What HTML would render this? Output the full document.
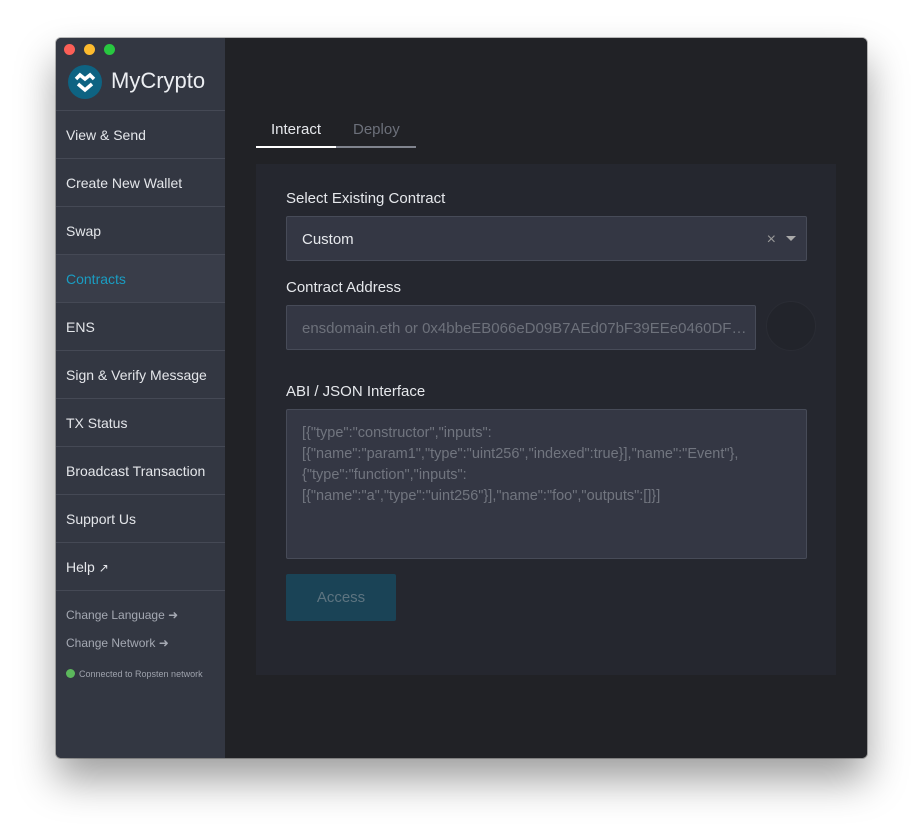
<!DOCTYPE html>
<html><head><meta charset="utf-8"><style>
*{box-sizing:border-box;margin:0;padding:0}
body{width:923px;height:832px;background:#fff;font-family:"Liberation Sans",sans-serif;position:relative;overflow:hidden}
.win{position:absolute;left:56px;top:38px;width:811px;height:720px;border-radius:5px;overflow:hidden;background:#212226;box-shadow:0 22px 40px rgba(0,0,0,.38),0 0 0 1px rgba(0,0,0,.25)}
.side{position:absolute;left:0;top:0;width:169px;height:720px;background:#333742}
.dot{position:absolute;top:6px;width:11px;height:11px;border-radius:50%}
.logo{position:absolute;left:12px;top:27px;width:34px;height:34px;border-radius:50%;background:#0e6382}
.brand{position:absolute;left:55px;top:30px;font-size:22px;color:#eceef2}
.nav{position:absolute;left:0;top:72px;width:169px}
.nav div{height:48px;border-top:1px solid #454955;color:#e4e6ea;font-size:14px;padding-left:10px;line-height:49px}
.nav div.act{background:#393d49;color:#1a9dc2}
.sm{position:absolute;left:10px;font-size:12px;color:#a5a9b3}
.main{position:absolute;left:169px;top:0;right:0;bottom:0;background:#212226}
.tab{position:absolute;top:83px;font-size:15px}
.panel{position:absolute;left:31px;top:126px;width:580px;height:511px;background:#25272f}
.lbl{position:absolute;left:30px;font-size:15px;color:#e6e8ec}
.inp{position:absolute;left:30px;width:521px;background:#343744;border:1px solid #474b58;border-radius:2px;font-size:15px}
</style></head><body>
<div class="win">
<div class="side">
<div class="dot" style="left:8px;background:#fc5f57"></div>
<div class="dot" style="left:28px;background:#fdbb2e"></div>
<div class="dot" style="left:48px;background:#28c840"></div>
<div class="logo"><svg width="34" height="34" viewBox="0 0 34 34"><path d="M8 14 L12 10 L17 14 L22 10 L26 14" stroke="#fff" stroke-width="3.5" fill="none"/><path d="M10 19 L17 25 L24 19" stroke="#fff" stroke-width="3.5" fill="none"/></svg></div>
<div class="brand">MyCrypto</div>
<div class="nav">
<div>View &amp; Send</div><div>Create New Wallet</div><div>Swap</div><div class="act">Contracts</div><div>ENS</div><div>Sign &amp; Verify Message</div><div>TX Status</div><div>Broadcast Transaction</div><div>Support Us</div><div>Help <span style="font-size:12px">↗</span></div><div style="height:1px"></div>
</div>
<div class="sm" style="top:570px">Change Language ➜</div>
<div class="sm" style="top:598px">Change Network ➜</div>
<div class="sm" style="top:631px;font-size:9px;color:#9ea2ac"><span style="display:inline-block;width:9px;height:9px;border-radius:50%;background:#5cb85c;vertical-align:-1px;margin-right:4px"></span>Connected to Ropsten network</div>
</div>
<div class="main">
<div class="tab" style="left:46px;color:#e6e8ec">Interact</div>
<div class="tab" style="left:128px;color:#6c707a">Deploy</div>
<div style="position:absolute;left:31px;top:108px;width:80px;height:2px;background:#fff"></div>
<div style="position:absolute;left:111px;top:108px;width:80px;height:2px;background:#80848e"></div>
<div class="panel">
<div class="lbl" style="top:26px">Select Existing Contract</div>
<div class="inp" style="top:52px;height:45px;line-height:45px;padding-left:15px;color:#e6e8ec">Custom<span style="position:absolute;right:30px;color:#999;font-size:16px">×</span><span style="position:absolute;right:10px;top:19px;border:5px solid transparent;border-top-color:#aaa;width:0;height:0"></span></div>
<div class="lbl" style="top:115px">Contract Address</div>
<div class="inp" style="top:141px;width:470px;height:45px;line-height:45px;padding-left:15px;color:#6d717b;white-space:nowrap;overflow:hidden">ensdomain.eth or 0x4bbeEB066eD09B7AEd07bF39EEe0460DF…</div>
<div style="position:absolute;left:510px;top:137px;width:50px;height:50px;border-radius:50%;background:#22242b;border:1px solid #2a2c34"></div>
<div class="lbl" style="top:219px">ABI / JSON Interface</div>
<div class="inp" style="top:245px;height:150px;padding:13px 15px;color:#71757f;line-height:21px;font-size:14.5px">[{"type":"constructor","inputs":<br>[{"name":"param1","type":"uint256","indexed":true}],"name":"Event"},<br>{"type":"function","inputs":<br>[{"name":"a","type":"uint256"}],"name":"foo","outputs":[]}]</div>
<div style="position:absolute;left:30px;top:410px;width:110px;height:47px;background:#1a4356;border-radius:2px;color:#5d7480;font-size:15px;text-align:center;line-height:48px">Access</div>
</div>
</div>
</div>
</body></html>
